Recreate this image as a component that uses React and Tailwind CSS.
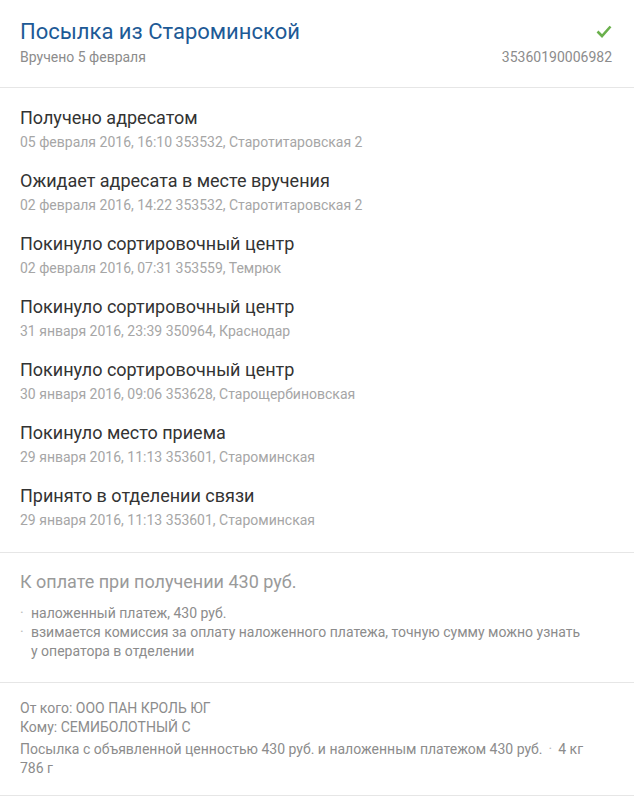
import React from "react";

const events = [
  ["Получено адресатом", "05 февраля 2016, 16:10 353532, Старотитаровская 2"],
  ["Ожидает адресата в месте вручения", "02 февраля 2016, 14:22 353532, Старотитаровская 2"],
  ["Покинуло сортировочный центр", "02 февраля 2016, 07:31 353559, Темрюк"],
  ["Покинуло сортировочный центр", "31 января 2016, 23:39 350964, Краснодар"],
  ["Покинуло сортировочный центр", "30 января 2016, 09:06 353628, Старощербиновская"],
  ["Покинуло место приема", "29 января 2016, 11:13 353601, Староминская"],
  ["Принято в отделении связи", "29 января 2016, 11:13 353601, Староминская"],
];

export default function App() {
  return (
    <div className="w-[634px] h-[798px] bg-white overflow-hidden" style={{ fontFamily: "Roboto, 'Noto Sans', sans-serif" }}>
      <div className="pl-5 pr-[22px] pt-[17px] h-[88px] border-b border-[#e6e6e6]">
        <div className="flex items-start justify-between">
          <div className="text-[22px] leading-[30px] text-[#1d5a96]">Посылка из Староминской</div>
          <svg width="16" height="13" viewBox="0 0 16 13" className="mt-[8px]">
            <path d="M1.5 6.5 L6 11 L14.5 1.5" fill="none" stroke="#6ab04c" strokeWidth="2.6" />
          </svg>
        </div>
        <div className="flex justify-between text-[14px] leading-[18px] text-[#8c8c8c] mt-px">
          <span>Вручено 5 февраля</span>
          <span>35360190006982</span>
        </div>
      </div>

      <div className="pl-5 pr-5 pt-[18px] pb-[20px] border-b border-[#e6e6e6] flex flex-col gap-[15px]">
        {events.map(([t, s], i) => (
          <div key={i}>
            <div className="text-[18px] leading-[24px] text-[#333]">{t}</div>
            <div className="text-[14px] leading-[24px] text-[#a6a6a6]">{s}</div>
          </div>
        ))}
      </div>

      <div className="pl-5 pr-5 pt-[18px] pb-[21px] border-b border-[#e6e6e6]">
        <div className="text-[18px] leading-[22px] text-[#9a9a9a]">К оплате при получении 430 руб.</div>
        <ul className="mt-[11px] text-[14px] leading-[19px] text-[#8c8c8c]">
          <li className="flex">
            <span className="w-[11px] shrink-0 text-[#bbb]">·</span>
            <span>наложенный платеж, 430 руб.</span>
          </li>
          <li className="flex">
            <span className="w-[11px] shrink-0 text-[#bbb]">·</span>
            <span>взимается комиссия за оплату наложенного платежа, точную сумму можно узнать<br />у оператора в отделении</span>
          </li>
        </ul>
      </div>

      <div className="pl-5 pr-5 pt-[16px] pb-[17px] border-b border-[#e6e6e6] text-[14px] leading-[19px] text-[#8c8c8c]">
        <div>От кого: ООО ПАН КРОЛЬ ЮГ</div>
        <div>Кому: СЕМИБОЛОТНЫЙ С</div>
        <div className="mt-[3px] w-[580px]">
          Посылка с объявленной ценностью 430 руб. и наложенным платежом 430 руб.<span className="text-[#bbb] mx-[6px]">·</span>4 кг 786 г
        </div>
      </div>
    </div>
  );
}
